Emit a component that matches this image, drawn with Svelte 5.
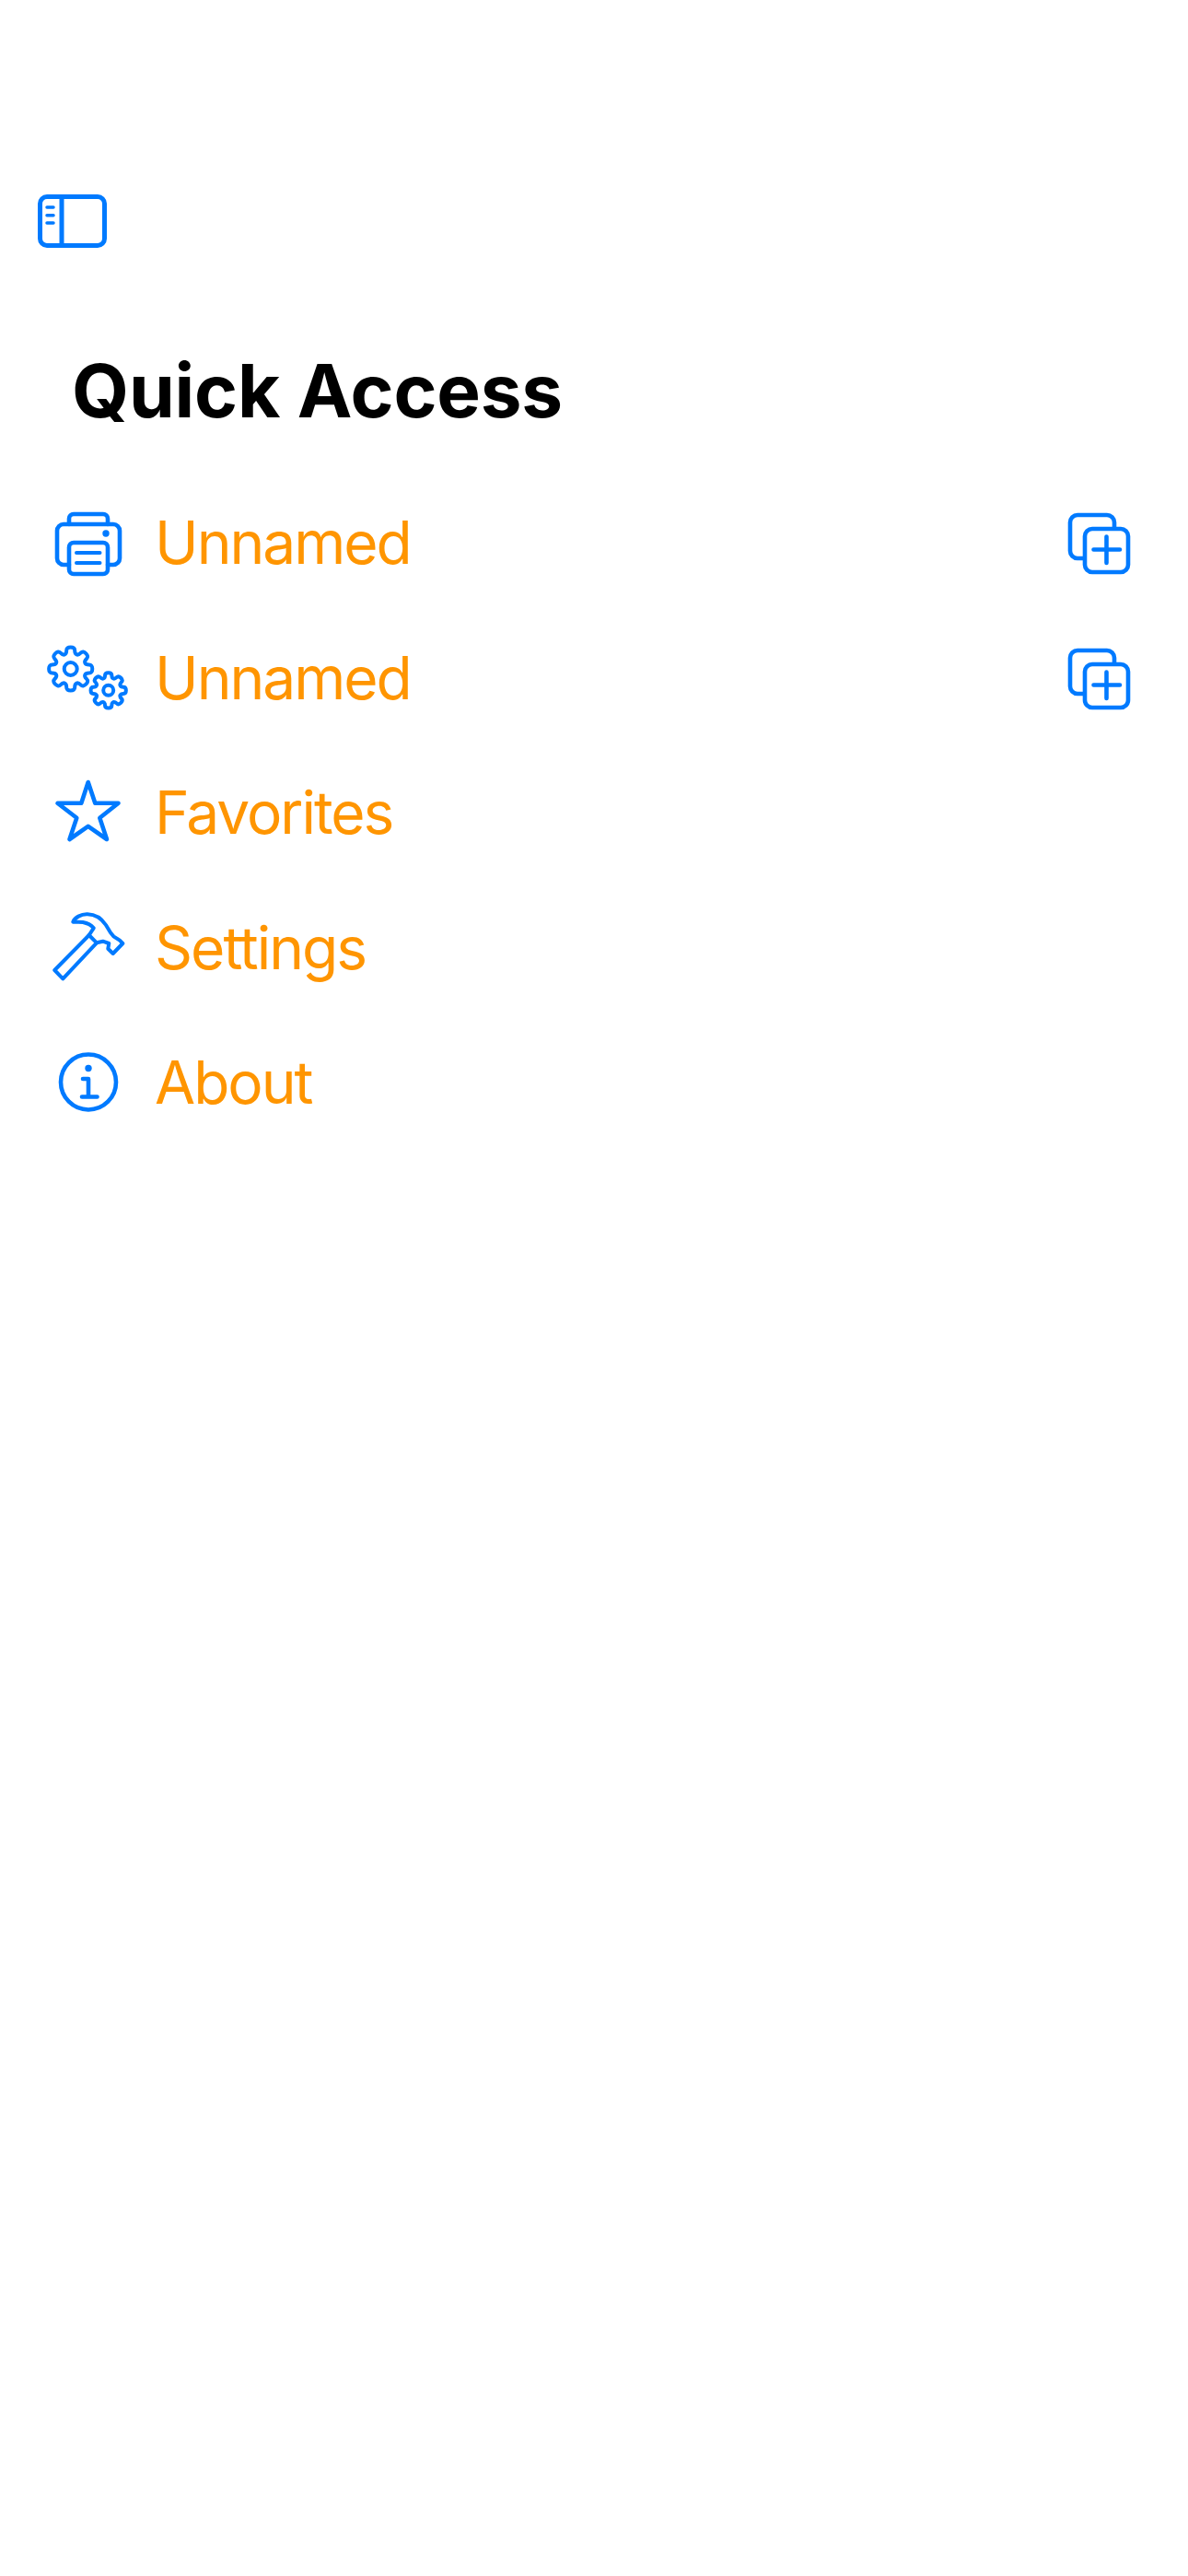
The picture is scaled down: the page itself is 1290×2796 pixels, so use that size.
<script>
  function gear(cx, cy, ro, ri, teeth) {
    const pts = [];
    const step = (Math.PI * 2) / teeth;
    for (let i = 0; i < teeth; i++) {
      const a = i * step - Math.PI / 2;
      for (const [f, r] of [[-0.34, ri], [-0.24, ro], [0.24, ro], [0.34, ri]]) {
        const t = a + f * step;
        pts.push([cx + r * Math.cos(t), cy + r * Math.sin(t)]);
      }
    }
    const n = pts.length;
    const mid = (p, q) => ((p[0] + q[0]) / 2).toFixed(2) + ' ' + ((p[1] + q[1]) / 2).toFixed(2);
    let d = 'M' + mid(pts[n - 1], pts[0]);
    for (let i = 0; i < n; i++) {
      const p = pts[i];
      d += 'Q' + p[0].toFixed(2) + ' ' + p[1].toFixed(2) + ' ' + mid(p, pts[(i + 1) % n]);
    }
    return d + 'Z';
  }
  const rows = [
    { icon: 'printer', label: 'Unnamed', add: true },
    { icon: 'gears', label: 'Unnamed', add: true },
    { icon: 'star', label: 'Favorites', add: false },
    { icon: 'hammer', label: 'Settings', add: false },
    { icon: 'info', label: 'About', add: false }
  ];
</script>

<main class="page">
  <svg class="sidebar" viewBox="0 0 75 58" width="75" height="58" aria-hidden="true">
    <rect x="2.5" y="2.5" width="70" height="53" rx="7.5" />
    <path d="M26 2.5V55.5" />
    <path class="thin" d="M10 14h7M10 22.7h7M10 31h7" />
  </svg>

  <h1>Quick Access</h1>

  <ul>
    {#each rows as row}
      <li>
        <svg class="icon" viewBox="-48 -48 96 96" aria-hidden="true">
          {#if row.icon === 'printer'}
            <path d="M-21 -20V-26a5 5 0 0 1 5-5H16a5 5 0 0 1 5 5V-20" />
            <path d="M-21 24H-27a7 7 0 0 1-7-7V-13a7 7 0 0 1 7-7H27a7 7 0 0 1 7 7V17a7 7 0 0 1-7 7H21" />
            <rect x="-21" y="0" width="42" height="34" rx="5" />
            <circle class="solid" cx="19" cy="-10" r="3.7" />
            <path class="fine" d="M-13 11H12.5M-13 22H12.5" />
          {:else if row.icon === 'gears'}
            <g class="fine">
              <path d={gear(-19.3, -10, 24, 17, 8)} />
              <circle cx="-19.3" cy="-10" r="7" />
              <path d={gear(21.7, 13.3, 19.5, 14, 8)} />
              <circle cx="21.7" cy="13.3" r="5.5" />
            </g>
          {:else if row.icon === 'star'}
            <path d="M-0.3 -33L7.3 -10.2H32.5L12.3 5.8L20 29L-0.3 14.8L-20.5 29L-12.7 5.8L-33.5 -10.2H-7.7Z" />
          {:else if row.icon === 'hammer'}
            <g class="fine">
              <path d="M-16.7 -28.3C-15 -33 -8 -37 -1 -36.7C8 -36.5 15 -31 19 -25L24 -16.7L27.3 -12.7L34 -8.3L37.3 -5L26.7 6L21.3 0.7L22.3 -5L15.7 -7.3L9 -5.7L-27.7 33.3L-36.7 24L0.7 -14L5.7 -21.7C3 -25 -1 -27 -6 -28C-10 -28.5 -14 -28 -16.7 -28.3Z" />
              <path d="M0.7 -14L9 -5.7" />
            </g>
          {:else}
            <circle cx="0" cy="-0.5" r="30" />
            <circle class="solid" cx="0" cy="-15.5" r="3.7" />
            <path d="M-6 -4H0V15.5M-7 15.5H9.5" />
          {/if}
        </svg>
        <span>{row.label}</span>
        {#if row.add}
          <svg class="icon" viewBox="-48 -48 96 96" aria-hidden="true">
            <rect x="-32" y="-30" width="48" height="47" rx="8" />
            <rect class="front" x="-16" y="-15" width="47" height="47" rx="8" />
            <path d="M7.5 -6.5V22M-6.5 7.5H22" />
          </svg>
        {/if}
      </li>
    {/each}
  </ul>
</main>

<style>
  :global(body) {
    margin: 0;
    background: #ffffff;
  }

  .page {
    height: 2796px;
    box-sizing: border-box;
    padding-top: 211px;
    font-family: Inter, "Liberation Sans", sans-serif;
  }

  .sidebar {
    display: block;
    margin-left: 41px;
    fill: none;
    stroke: #007aff;
    stroke-width: 5;
    stroke-linecap: round;
  }

  .thin {
    stroke-width: 3.5;
  }

  h1 {
    margin: 107px 0 0 78px;
    font-size: 80px;
    line-height: 96px;
    font-weight: 700;
    letter-spacing: -0.2px;
    color: #000000;
  }

  ul {
    list-style: none;
    margin: 44px 0 0;
    padding: 0 48px;
  }

  li {
    display: flex;
    align-items: center;
    height: 146.5px;
    gap: 24px;
  }

  span {
    flex: 1;
    font-size: 64px;
    line-height: 76px;
    font-weight: 400;
    letter-spacing: -2px;
    color: #ff9500;
  }

  .icon {
    flex: none;
    width: 96px;
    height: 96px;
    fill: none;
    stroke: #007aff;
    stroke-width: 4.6;
    stroke-linecap: round;
    stroke-linejoin: round;
  }

  .fine {
    stroke-width: 4;
  }

  .solid {
    fill: #007aff;
    stroke: none;
  }

  .front {
    fill: #ffffff;
  }
</style>
